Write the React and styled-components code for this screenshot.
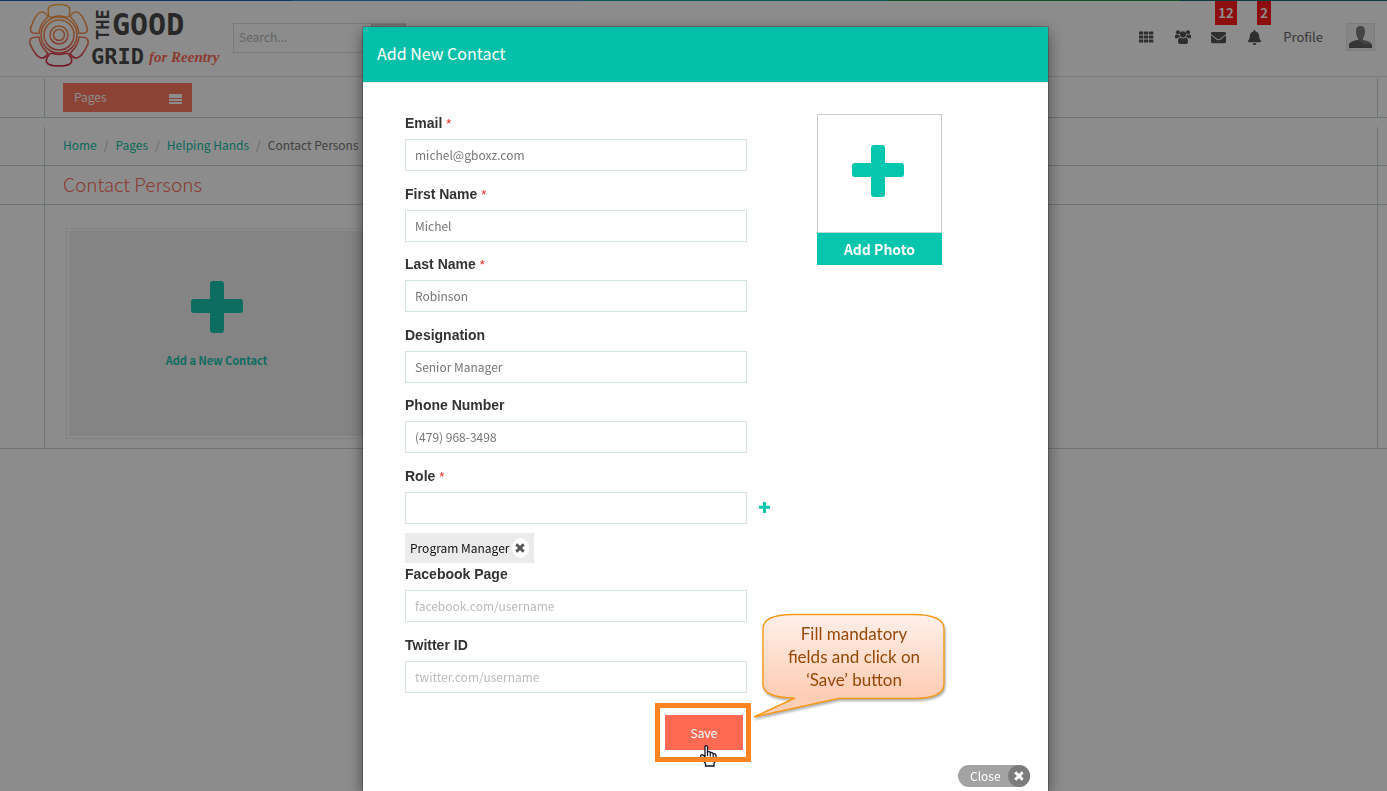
import styled, { createGlobalStyle } from "styled-components";
import { FaEnvelope, FaBell } from "react-icons/fa";

const fields = [
    { id: "email", label: "Email", required: true, value: "michel@gboxz.com" },
    { id: "first", label: "First Name", required: true, value: "Michel" },
    { id: "last", label: "Last Name", required: true, value: "Robinson" },
    { id: "designation", label: "Designation", value: "Senior Manager" },
    { id: "phone", label: "Phone Number", value: "(479) 968-3498" },
];

const socials = [
    { id: "facebook", label: "Facebook Page", placeholder: "facebook.com/username" },
    { id: "twitter", label: "Twitter ID", placeholder: "twitter.com/username" },
];

function Logo() {
    return (
        <LogoSvg viewBox="0 0 196 72" aria-label="The Good Grid for Reentry">
            <defs>
                <linearGradient id="petals" gradientUnits="userSpaceOnUse" x1="0" y1="3" x2="0" y2="66">
                    <stop offset="0" stopColor="#ffaf45" />
                    <stop offset="0.55" stopColor="#f5835a" />
                    <stop offset="0.85" stopColor="#dc3545" />
                    <stop offset="1" stopColor="#d01f3c" />
                </linearGradient>
            </defs>
            <g fill="none" stroke="url(#petals)" strokeWidth="1.6">
                <path d="M24 15 Q22.500 11 23.500 7 Q25 3.500 34 3.500 Q43 3.500 44.500 7 Q45.500 11 44 15 Q43 17 40 16 Q34 14 28 16 Q25 17 24 15 Z" />
                <path d="M24 54 Q20.500 58 21.500 61 Q23 65 34 65 Q45 65 46.500 61 Q47.500 58 44 54 Q43 51.500 40 52.500 Q34 54.500 28 52.500 Q25 51.500 24 54 Z" />
                <path d="M20 19 L23 15.500 Q20 10.500 16 11 Q11 12 6 26 Q4.500 31 8 32 L14 32.500 Q15 24 20 19 Z" />
                <path d="M48 19 L45 15.500 Q48 10.500 52 11 Q57 12 62 26 Q63.500 31 60 32 L54 32.500 Q53 24 48 19 Z" />
                <path d="M20 49 L23 52.500 Q20 57.500 16 57 Q11 56 5 43 Q4 37.500 8 36.500 L14 36 Q15 44 20 49 Z" />
                <path d="M48 49 L45 52.500 Q48 57.500 52 57 Q57 56 63 43 Q64 37.500 60 36.500 L54 36 Q53 44 48 49 Z" />
                <circle cx="34" cy="34" r="18" />
                <circle cx="34" cy="34" r="15" />
                <circle cx="34" cy="34" r="9" />
                <circle cx="34" cy="34" r="5.500" />
            </g>
            <g fill="#4a4a4a" fontFamily="DejaVu Sans Mono, monospace" fontWeight="700">
                <text transform="translate(84 39) rotate(-90)" fontSize="17">THE</text>
                <text x="87" y="34" fontSize="30">GOOD</text>
                <text x="66" y="63" fontSize="22">GRID</text>
            </g>
            <text x="124" y="61" fill="#ff6b55" fontFamily="Liberation Serif, serif" fontStyle="italic" fontWeight="700" fontSize="15">for Reentry</text>
        </LogoSvg>
    );
}

function Avatar() {
    return (
        <AvatarSvg viewBox="0 0 29 28" aria-label="User">
            <rect x="0.500" y="0.500" width="28" height="27" fill="#f2f2f2" stroke="#e6e6e6" />
            <path d="M10 8 Q10 3 14.500 3 Q19 3 19 8 Q19 13 17 15 V17 Q25 18 26 22 V25 H3 V22 Q4 18 12 17 V15 Q10 13 10 8 Z" fill="#7c7c7c" />
            <path d="M3 21 Q5 18 12 17 L18 21 L26 22 V25 H3 Z" fill="#606060" />
        </AvatarSvg>
    );
}

function GridIcon() {
    return (
        <svg width="15" height="12" viewBox="0 0 15 12" fill="currentColor">
            {[0, 4, 8].map((y) => [0, 5, 10].map((x) => (
                <rect key={`${x}-${y}`} x={x} y={y + 0.500} width="4.300" height="3" rx="0.500" />
            )))}
        </svg>
    );
}

function GroupIcon() {
    return (
        <svg width="16" height="14" viewBox="0 0 16 14" fill="currentColor">
            <circle cx="3" cy="2.300" r="2.100" />
            <circle cx="13" cy="2.300" r="2.100" />
            <circle cx="8" cy="4.300" r="3.100" />
            <path d="M0 8 V6 Q0 4.200 1.500 4.500 Q3 5.300 4.200 4.800 Q4.300 6 5 7 Q3.500 7 2.700 8.200 H1.200 Q0 8.200 0 8 Z" />
            <path d="M16 8 V6 Q16 4.200 14.500 4.500 Q13 5.300 11.800 4.800 Q11.700 6 11 7 Q12.500 7 13.300 8.200 H14.800 Q16 8.200 16 8 Z" />
            <path d="M3 12 Q3 7.700 5.200 7.600 Q8 9.300 10.800 7.600 Q13 7.700 13 12 Q13 14 11 14 H5 Q3 14 3 12 Z" />
        </svg>
    );
}

function MenuIcon() {
    return (
        <svg width="13" height="10" viewBox="0 0 13 10" fill="currentColor">
            <rect width="13" height="4" />
            <rect y="5" width="13" height="2" />
            <rect y="8" width="13" height="2" />
        </svg>
    );
}

function Cross() {
    return (
        <svg width="10" height="10" viewBox="0 0 10 10" stroke="currentColor" strokeWidth="3">
            <path d="M1.300 1.300 L8.700 8.700 M8.700 1.300 L1.300 8.700" />
        </svg>
    );
}

function Plus({ size = 52 }) {
    return (
        <PlusSvg viewBox="0 0 52 52" width={size} height={size}>
            <rect x="19" y="0" width="14" height="52" rx="3" />
            <rect x="0" y="18" width="52" height="14" rx="3" />
        </PlusSvg>
    );
}

function Hand() {
    return (
        <HandSvg viewBox="0 0 17 22">
            <path
                d="M5 2 Q5 0.700 6.200 0.700 Q7.500 0.700 7.500 2 V7 Q9.800 6 10.300 7.700 Q12.500 7 13.200 8.700 Q16 8.300 16 11 V14 Q16 16 14 18.500 V21 H5.500 V18.500 Q3 16 1 12 Q0 10 2 9.700 Q3.500 10 5 12 Z"
                fill="#fff"
                stroke="#151525"
                strokeWidth="1.300"
            />
            <path d="M7.500 7 V11 M10.300 8 V11.500 M13.200 9 V12" stroke="#151525" strokeWidth="1.200" />
        </HandSvg>
    );
}

function Field({ id, label, required, value, placeholder }) {
    return (
        <FieldBox>
            <Label htmlFor={id}>
                {label} {required && <Star>*</Star>}
            </Label>
            <Input id={id} defaultValue={value} placeholder={placeholder} />
        </FieldBox>
    );
}

export default function App() {
    return (
        <Screen>
            <GlobalStyle />
            <Stripe />
            <Header>
                <Logo />
                <Search>
                    <SearchInput aria-label="Search" placeholder="Search..." />
                    <SearchButton aria-label="Go" />
                </Search>
                <Nav>
                    <NavButton aria-label="Apps"><GridIcon /></NavButton>
                    <NavButton aria-label="Groups"><GroupIcon /></NavButton>
                    <NavButton aria-label="Messages"><FaEnvelope /><Badge $left={4}>12</Badge></NavButton>
                    <NavButton aria-label="Alerts"><FaBell /><Badge $left={10}>2</Badge></NavButton>
                    <ProfileLink href="#profile">Profile</ProfileLink>
                    <Avatar />
                </Nav>
            </Header>
            <MenuRow>
                <Gutter>
                    <PagesButton>Pages <MenuIcon /></PagesButton>
                </Gutter>
            </MenuRow>
            <Main>
                <Row>
                    <Gutter>
                        <Crumbs>
                            <a href="#home">Home</a><i>/</i>
                            <a href="#pages">Pages</a><i>/</i>
                            <a href="#hands">Helping Hands</a><i>/</i>
                            <span>Contact Persons</span>
                        </Crumbs>
                    </Gutter>
                </Row>
                <Row>
                    <Gutter>
                        <PageTitle>Contact Persons</PageTitle>
                    </Gutter>
                </Row>
                <Row>
                    <Gutter>
                        <Card>
                            <CardButton><Plus /> Add a New Contact</CardButton>
                        </Card>
                    </Gutter>
                </Row>
            </Main>
            <Overlay>
                <Modal role="dialog" aria-labelledby="modal-title">
                    <ModalTitle id="modal-title">Add New Contact</ModalTitle>
                    <ModalBody>
                        <Form>
                            {fields.map((field) => <Field key={field.id} {...field} />)}
                            <RoleBox>
                                <Label htmlFor="role">Role <Star>*</Star></Label>
                                <RoleLine>
                                    <Input id="role" />
                                    <AddRole type="button" aria-label="Add role"><Plus size={11} /></AddRole>
                                </RoleLine>
                                <Tag>
                                    Program Manager
                                    <TagClose type="button" aria-label="Remove Program Manager"><Cross /></TagClose>
                                </Tag>
                            </RoleBox>
                            {socials.map((field) => <Field key={field.id} {...field} />)}
                            <SaveLine>
                                <Highlight>
                                    <SaveButton type="button">Save</SaveButton>
                                    <Hand />
                                </Highlight>
                            </SaveLine>
                        </Form>
                        <PhotoButton>
                            <PhotoFrame><Plus /></PhotoFrame>
                            <PhotoText>Add Photo</PhotoText>
                        </PhotoButton>
                    </ModalBody>
                    <Callout>
                        <Bubble viewBox="0 0 194 107">
                            <defs>
                                <linearGradient id="peach" x1="0" y1="0" x2="0" y2="1">
                                    <stop offset="0" stopColor="#fff0ea" />
                                    <stop offset="0.8" stopColor="#ffcdb5" />
                                    <stop offset="1" stopColor="#ffd0ba" />
                                </linearGradient>
                            </defs>
                            <path
                                d="M40 1.500 H160 Q191 1.500 191 16 V71 Q191 85.500 160 85.500 H85 L1 104 L42 85 Q10 85 10 71 V16 Q10 1.500 40 1.500 Z"
                                fill="url(#peach)"
                                stroke="#f79a1a"
                                strokeWidth="1.400"
                            />
                        </Bubble>
                        <CalloutText>Fill mandatory fields and click on ‘Save’ button</CalloutText>
                    </Callout>
                    <CloseButton>Close <CloseMark><Cross /></CloseMark></CloseButton>
                </Modal>
            </Overlay>
        </Screen>
    );
}

const sans = `"Noto Sans CJK SC", "Noto Sans", sans-serif`;

const GlobalStyle = createGlobalStyle`
    * {
        box-sizing: border-box;
    }
    body {
        margin: 0;
        font-family: ${sans};
        font-size: 12px;
        line-height: 20px;
        color: #555555;
        overflow: hidden;
    }
    button, input {
        font-family: inherit;
        font-size: inherit;
        line-height: inherit;
        border: 0;
        margin: 0;
        padding: 0;
        background: none;
    }
    a {
        text-decoration: none;
    }
`

const Screen = styled.div`
    min-height: 100vh;
    background: #FFFFFF;
`

const Stripe = styled.div`
    height: 1px;
    background: linear-gradient(90deg, #1F5FC8 0 21%, #2888D0 21% 42%, #18A0A8 42% 64%, #18A048 64% 85%, #186870 85%);
`

const Header = styled.header`
    height: 76px;
    display: flex;
    align-items: flex-start;
    padding: 0 12px 0 25px;
    border-bottom: 1px solid #D9E4E6;
`

const LogoSvg = styled.svg`
    width: 196px;
    height: 72px;
`

const Search = styled.div`
    display: flex;
    width: 173px;
    height: 30px;
    margin: 22px 0 0 12px;
    border: 1px solid #D5E2E5;
`

const SearchInput = styled.input`
    flex: 1;
    min-width: 0;
    padding: 0 0 2px 5px;
    &::placeholder {
        color: #B8B8B8;
    }
`

const SearchButton = styled.button`
    width: 34px;
    background: #E4E4E4;
    border: 1px solid #CCCCCC;
`

const Nav = styled.nav`
    display: flex;
    align-items: center;
    gap: 21px;
    height: 30px;
    margin: 21px 0 0 auto;
`

const NavButton = styled.button`
    position: relative;
    width: 15px;
    height: 16px;
    color: #555555;
    font-size: 15px;
    display: flex;
    align-items: center;
    justify-content: center;
    svg {
        flex-shrink: 0;
    }
`

const Badge = styled.span`
    position: absolute;
    left: ${({ $left }) => $left}px;
    bottom: 20px;
    height: 24px;
    padding: 0 3px;
    background: #FF1A1A;
    color: #FFFFFF;
    font-size: 13px;
    font-weight: 700;
    line-height: 24px;
`

const ProfileLink = styled.a`
    margin-right: 2px;
    color: #666666;
    font-size: 13px;
`

const AvatarSvg = styled.svg`
    width: 29px;
    height: 28px;
`

const MenuRow = styled.div`
    padding: 1px 9px 0 44px;
    border-bottom: 1px solid #C5D5DA;
`

const Gutter = styled.div`
    border-left: 1px solid #C5D5DA;
    border-right: 1px solid #C5D5DA;
    padding-left: 18px;
`

const PagesButton = styled.button`
    display: inline-flex;
    vertical-align: top;
    align-items: center;
    justify-content: space-between;
    width: 129px;
    height: 29px;
    margin: 5px 0;
    padding: 0 10px 1px 11px;
    background: #FF7860;
    color: #FFFFFF;
    svg {
        margin-top: 3px;
    }
`

const Main = styled.main`
    padding-top: 9px;
`

const Row = styled.div`
    padding: 0 9px 0 44px;
    border-bottom: 1px solid #C5D5DA;
`

const Crumbs = styled.div`
    height: 38px;
    display: flex;
    align-items: center;
    padding-bottom: 2px;
    a {
        color: #16BFA8;
    }
    i {
        color: #BBBBBB;
        font-style: normal;
        margin: 0 7px;
    }
    span {
        color: #777777;
    }
`

const PageTitle = styled.h1`
    margin: 0;
    padding-bottom: 2px;
    color: #FF6B60;
    font-size: 19px;
    font-weight: 300;
    line-height: 36px;
`

const Card = styled.div`
    padding: 23px 0 9px 3px;
`

const CardButton = styled.button`
    display: flex;
    flex-direction: column;
    align-items: center;
    gap: 17px;
    width: 301px;
    height: 211px;
    padding-top: 52px;
    background: #F0F0F0;
    border: 1px solid #EBEBEB;
    box-shadow: inset 0 0 0 2px #FFFFFF;
    color: #16C7AF;
    font-size: 11px;
    font-weight: 700;
`

const PlusSvg = styled.svg`
    fill: currentColor;
    flex-shrink: 0;
`

const Overlay = styled.div`
    position: fixed;
    inset: 0;
    padding-top: 27px;
    background: rgba(0, 0, 0, 0.45);
    display: flex;
    justify-content: center;
    align-items: flex-start;
`

const Modal = styled.section`
    position: relative;
    width: 685px;
    min-height: 100%;
    margin-left: 24px;
    background: #FFFFFF;
    box-shadow: 0 0 0 1px rgba(0, 0, 0, 0.2), 0 5px 15px rgba(0, 0, 0, 0.5);
`

const ModalTitle = styled.h2`
    margin: 0;
    padding: 0 14px 2px;
    background: #05C0A8;
    border-bottom: 1px solid #E5E5E5;
    color: #FFFFFF;
    font-size: 16px;
    font-weight: 400;
    line-height: 53px;
`

const ModalBody = styled.div`
    display: flex;
    align-items: flex-start;
    gap: 70px;
    padding: 31px 42px 0;
`

const Form = styled.form`
    width: 342px;
`

const FieldBox = styled.div`
    margin-bottom: 13px;
    &:nth-child(odd) {
        margin-bottom: 14px;
    }
`

const Label = styled.label`
    display: block;
    padding-bottom: 7px;
    color: #333333;
    font-family: "Liberation Sans", sans-serif;
    font-size: 14px;
    font-weight: 700;
    line-height: 18px;
`

const Star = styled.span`
    color: #FF2020;
    font-size: 13px;
    font-weight: 400;
    line-height: 1;
`

const Input = styled.input`
    display: block;
    width: 100%;
    height: 32px;
    padding: 0 9px 2px;
    border: 1px solid #D5E3E6;
    color: #777777;
    &::placeholder {
        color: #BBBBBB;
    }
`

const RoleBox = styled.div`
    margin-bottom: 2px;
`

const RoleLine = styled.div`
    position: relative;
`

const AddRole = styled.button`
    position: absolute;
    top: 10px;
    left: 100%;
    margin-left: 12px;
    color: #05C7AE;
    display: flex;
`

const Tag = styled.div`
    display: inline-flex;
    align-items: center;
    gap: 2px;
    height: 30px;
    margin-top: 9px;
    padding: 0 5px;
    background: #EBEBEB;
    color: #111111;
    vertical-align: top;
`

const TagClose = styled.button`
    display: flex;
    align-items: center;
    justify-content: center;
    width: 17px;
    height: 20px;
    border-radius: 50%;
    background: #FFFFFF;
    color: #555555;
`

const SaveLine = styled.div`
    display: flex;
    justify-content: flex-end;
    margin: -3px -4px 0 0;
`

const Highlight = styled.div`
    position: relative;
    padding: 12px 8px 12px 10px;
    &::after {
        content: "";
        position: absolute;
        inset: 0;
        border: 5px solid #FF8424;
        pointer-events: none;
    }
`

const SaveButton = styled.button`
    display: block;
    width: 78px;
    height: 35px;
    background: #FF6B52;
    color: #FFFFFF;
`

const HandSvg = styled.svg`
    position: absolute;
    left: 45px;
    top: 42px;
    width: 17px;
    height: 22px;
`

const PhotoButton = styled.button`
    width: 125px;
    color: #05C7AE;
`

const PhotoFrame = styled.span`
    display: flex;
    height: 119px;
    padding: 30px 0 0 34px;
    border: 1px solid #CCCCCC;
    border-bottom-color: #BFD8D4;
`

const PhotoText = styled.span`
    display: block;
    background: #08C6AE;
    color: #FFFFFF;
    font-size: 14px;
    font-weight: 700;
    line-height: 32px;
`

const Callout = styled.div`
    position: absolute;
    left: 390px;
    top: 586px;
    width: 194px;
    padding: 9px 22px 0 30px;
`

const Bubble = styled.svg`
    position: absolute;
    left: 0;
    top: 0;
    width: 194px;
    height: 107px;
    filter: drop-shadow(1px 2px 1px rgba(0, 0, 0, 0.3));
`

const CalloutText = styled.p`
    position: relative;
    margin: 0;
    color: #984807;
    font-family: Lato, sans-serif;
    font-size: 17px;
    line-height: 23px;
    text-align: center;
`

const CloseButton = styled.button`
    position: absolute;
    right: 18px;
    top: 738px;
    display: flex;
    align-items: center;
    justify-content: space-between;
    width: 72px;
    height: 22px;
    padding-left: 12px;
    border-radius: 11px;
    background: #A3A3A3;
    color: #FFFFFF;
`

const CloseMark = styled.span`
    display: flex;
    align-items: center;
    justify-content: center;
    width: 22px;
    height: 22px;
    border-radius: 50%;
    background: #7C7C7C;
`
